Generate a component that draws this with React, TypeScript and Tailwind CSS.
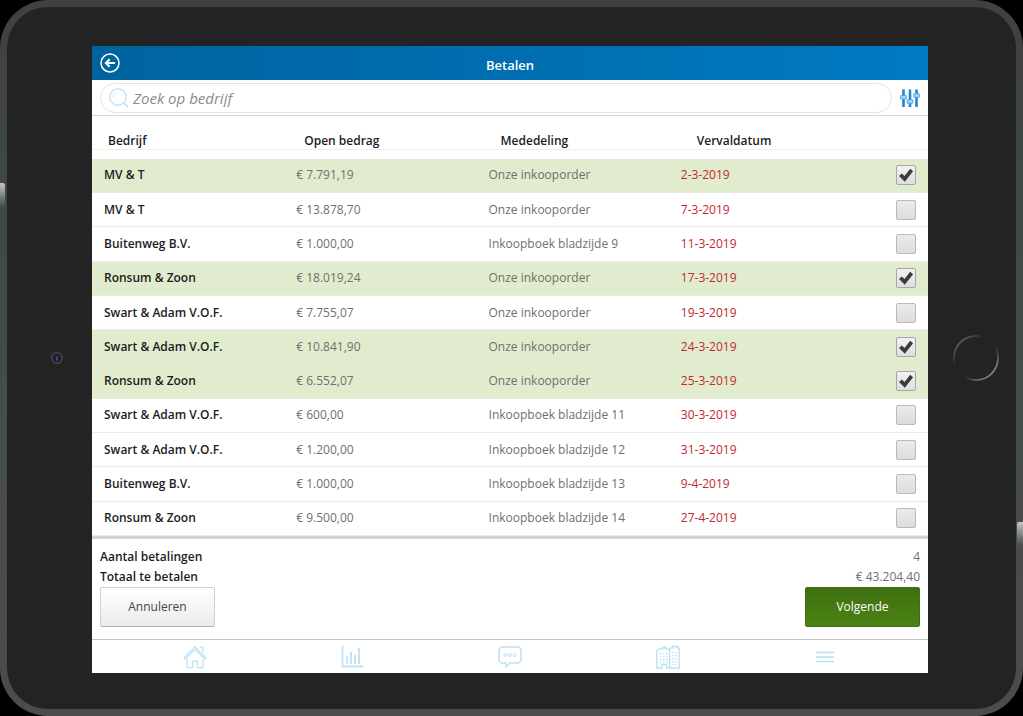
import { useState } from "react";
import type { ReactNode } from "react";

type Payment = {
  company: string;
  amount: number;
  note: string;
  due: string;
  selected: boolean;
};

const initialPayments: Payment[] = [
  { company: "MV & T", amount: 7791.19, note: "Onze inkooporder", due: "2-3-2019", selected: true },
  { company: "MV & T", amount: 13878.7, note: "Onze inkooporder", due: "7-3-2019", selected: false },
  { company: "Buitenweg B.V.", amount: 1000, note: "Inkoopboek bladzijde 9", due: "11-3-2019", selected: false },
  { company: "Ronsum & Zoon", amount: 18019.24, note: "Onze inkooporder", due: "17-3-2019", selected: true },
  { company: "Swart & Adam V.O.F.", amount: 7755.07, note: "Onze inkooporder", due: "19-3-2019", selected: false },
  { company: "Swart & Adam V.O.F.", amount: 10841.9, note: "Onze inkooporder", due: "24-3-2019", selected: true },
  { company: "Ronsum & Zoon", amount: 6552.07, note: "Onze inkooporder", due: "25-3-2019", selected: true },
  { company: "Swart & Adam V.O.F.", amount: 600, note: "Inkoopboek bladzijde 11", due: "30-3-2019", selected: false },
  { company: "Swart & Adam V.O.F.", amount: 1200, note: "Inkoopboek bladzijde 12", due: "31-3-2019", selected: false },
  { company: "Buitenweg B.V.", amount: 1000, note: "Inkoopboek bladzijde 13", due: "9-4-2019", selected: false },
  { company: "Ronsum & Zoon", amount: 9500, note: "Inkoopboek bladzijde 14", due: "27-4-2019", selected: false },
];

function euro(value: number) {
  const [whole, cents] = value.toFixed(2).split(".");
  return `€ ${whole.replace(/\B(?=(\d{3})+$)/g, ".")},${cents}`;
}

function BackIcon() {
  return (
    <svg className="size-5" viewBox="0 0 20 20" fill="none" stroke="white" aria-hidden="true">
      <circle cx="10" cy="10" r="9" strokeWidth="1.5" />
      <path d="M15 10H6M9.6 6.2 5.8 10l3.8 3.8" strokeWidth="2" />
    </svg>
  );
}

function SearchIcon() {
  return (
    <svg className="size-5 shrink-0" viewBox="0 0 20 20" fill="none" stroke="#c6e3f6" aria-hidden="true">
      <circle cx="9" cy="9" r="8.2" strokeWidth="1.5" />
      <path d="M4.2 9.2a5.2 5.2 0 0 1 3.6-4.8" strokeWidth="0.8" />
      <path d="m15 15 4 4" strokeWidth="2" />
    </svg>
  );
}

function FilterIcon() {
  return (
    <svg className="h-5 w-5" viewBox="0 0 20 20" fill="none" aria-hidden="true">
      <path d="M3.5 1.500v17.500M10 1.500v17.500M16.500 1.500v17.500" stroke="#1f86cf" strokeWidth="2.600" />
      <g fill="#a9d6f5" stroke="#3f9fe0" strokeWidth="0.900">
        <rect x="0.600" y="7.500" width="5.800" height="3.600" rx="0.600" />
        <rect x="7.100" y="11.700" width="5.800" height="3.600" rx="0.600" />
        <rect x="13.600" y="5.700" width="5.800" height="3.600" rx="0.600" />
      </g>
    </svg>
  );
}

function HomeIcon() {
  return (
    <svg className="size-6" viewBox="0 0 24 24" fill="none" stroke="#c0e1f7" strokeWidth="1.300" aria-hidden="true">
      <path d="M1 13 12 1.600 23 13l-1.200 1.100L12 4.200l-9.800 9.900z" />
      <path d="M4.200 14v8.700h5.600v-6.500h4.600v6.500h5.600V14M16.500 2.200h3.300v5" />
    </svg>
  );
}

function ChartIcon() {
  return (
    <svg className="h-[22px] w-[22px]" viewBox="0 0 22 22" fill="none" stroke="#c0e1f7" aria-hidden="true">
      <path d="M1.500 0v20.500H22" strokeWidth="1.800" />
      <path d="M6.200 18v-7.500M10 18V6M14 18V9M18 18V2" strokeWidth="2" />
    </svg>
  );
}

function ChatIcon() {
  return (
    <svg className="h-[22px] w-6" viewBox="0 0 24 22" fill="none" stroke="#c0e1f7" aria-hidden="true">
      <path
        d="M4.500 1h15A3.500 3.500 0 0 1 23 4.500v9a3.500 3.500 0 0 1-3.500 3.500h-7.800L8 20.800V17H4.500A3.500 3.500 0 0 1 1 13.500v-9A3.500 3.500 0 0 1 4.500 1z"
        strokeWidth="1.600"
      />
      <g strokeWidth="1">
        <circle cx="7.300" cy="9" r="1.500" />
        <circle cx="12" cy="9" r="1.500" />
        <circle cx="16.700" cy="9" r="1.500" />
      </g>
    </svg>
  );
}

function BuildingsIcon() {
  return (
    <svg className="size-6" viewBox="0 0 24 24" fill="none" stroke="#b9dff7" aria-hidden="true">
      <path
        d="M.8 23V5.500l2.700-1.700h2.700V3h4v.8h1.600l1.900 1.700V23h-3v-3.500H6V23zM13.700 23h9.500V3.200h-1.700v-1.700h-5v1.700h-2.800v2.300M8.200 3V.3"
        strokeWidth="1.300"
      />
      <path d="M4.600 8v10M7.800 8v10M11 8v10M17 7v13M20 7v13" strokeWidth="1.300" strokeDasharray="1.500 1.500" />
    </svg>
  );
}

function MenuIcon() {
  return (
    <svg className="h-3 w-[18px]" viewBox="0 0 18 12" stroke="#b9dff7" strokeWidth="1.700" aria-hidden="true">
      <path d="M0 1.500h18M0 6h18M0 10.500h18" />
    </svg>
  );
}

const tabs: { label: string; icon: ReactNode }[] = [
  { label: "Home", icon: <HomeIcon /> },
  { label: "Cijfers", icon: <ChartIcon /> },
  { label: "Berichten", icon: <ChatIcon /> },
  { label: "Bedrijven", icon: <BuildingsIcon /> },
  { label: "Menu", icon: <MenuIcon /> },
];

function PaymentCheckbox({ label, checked, onChange }: { label: string; checked: boolean; onChange: () => void }) {
  return (
    <label className="relative block size-5">
      <input
        type="checkbox"
        aria-label={label}
        checked={checked}
        onChange={onChange}
        className="block size-5 appearance-none rounded-xs border border-[#bababa] bg-linear-to-b from-[#ebebeb] to-[#dcdcdc] checked:border-[#a6a6a6] checked:from-[#f2f2f2] checked:to-[#dedede]"
      />
      {checked && (
        <svg className="pointer-events-none absolute inset-0 size-5" viewBox="0 0 20 20" aria-hidden="true">
          <path d="M3 11 5.800 8.400l2.700 2.600 5.700-7.200 2.900 2.500-8.300 10.500z" fill="#3b3b3b" />
        </svg>
      )}
    </label>
  );
}

export default function App() {
  const [payments, setPayments] = useState(initialPayments);
  const selected = payments.filter((p) => p.selected);
  const total = selected.reduce((sum, p) => sum + p.amount, 0);

  const toggle = (index: number) =>
    setPayments((list) => list.map((p, i) => (i === index ? { ...p, selected: !p.selected } : p)));

  return (
    <div className="flex min-h-screen bg-black font-['Open_Sans','Noto_Sans',sans-serif] text-xs text-[#6f6f6f]">
      <div className="relative flex flex-1 overflow-hidden rounded-[48px] bg-linear-to-b from-[#3d4142] via-[#454b4b] to-[#4b4d4d] p-[7px]">
        <span className="absolute top-[183px] left-0 h-6 w-[5px] rounded-r-xs bg-linear-to-b from-[#c4c7c7] to-[#454b4b]" />
        <span className="absolute top-[522px] right-0 h-6 w-[6px] rounded-l-xs bg-linear-to-b from-[#c4c7c7] to-[#454b4b]" />
        <div className="grid flex-1 grid-cols-[85px_1fr_88px] items-center rounded-[41px] bg-[#232323]">
          <div className="flex justify-center pl-[14px]">
            <svg className="size-[14px]" viewBox="0 0 14 14" aria-hidden="true">
              <circle cx="7" cy="7" r="6.300" fill="#3c3a44" />
              <circle cx="7" cy="7" r="4" fill="#1f1c30" />
              <path d="M6 9.500h2L7.500 5h-1z" fill="#55526e" />
            </svg>
          </div>

          <main className="mt-[39px] mb-9 flex flex-col self-stretch bg-white">
            <header className="grid h-[34px] grid-cols-[1fr_auto_1fr] items-center bg-linear-to-r from-[#00639f] to-[#007ac2] px-2">
              <button type="button" aria-label="Terug" className="justify-self-start">
                <BackIcon />
              </button>
              <h1 className="pt-1 text-[13px] leading-5 font-semibold text-white">Betalen</h1>
            </header>

            <div className="flex h-9 items-center gap-2 border-b border-[#d9d9d9] px-2">
              <label className="flex h-[30px] flex-1 items-center gap-1 rounded-full border border-[#e2e2e2] px-2">
                <SearchIcon />
                <input
                  type="search"
                  aria-label="Zoek op bedrijf"
                  placeholder="Zoek op bedrijf"
                  className="min-w-0 flex-1 bg-transparent text-[15px] italic outline-none placeholder:text-[#8c8c8c]"
                />
              </label>
              <button type="button" aria-label="Filter">
                <FilterIcon />
              </button>
            </div>

            <table className="h-[420px] w-full table-fixed border-collapse text-left">
              <colgroup>
                <col className="w-[23%]" />
                <col className="w-[23%]" />
                <col className="w-[23%]" />
                <col className="w-[23%]" />
                <col className="w-[8%]" />
              </colgroup>
              <thead className="text-[#1c1c1c]">
                <tr className="h-[33px] border-b border-[#f0f0ea] align-bottom">
                  <th className="pl-4 font-semibold">Bedrijf</th>
                  <th className="pl-5 font-semibold">Open bedrag</th>
                  <th className="pl-6 font-semibold">Mededeling</th>
                  <th className="pl-7 font-semibold">Vervaldatum</th>
                  <td />
                </tr>
                <tr className="h-[10px]">
                  <td colSpan={5} />
                </tr>
              </thead>
              <tbody>
                {payments.map((p, i) => (
                  <tr key={i} className={p.selected ? "border-b border-[#e8eedc] bg-[#e1ecce]" : "border-b border-[#ececec]"}>
                    <td className="pl-3 font-semibold text-[#1c1c1c]">{p.company}</td>
                    <td className="pl-3">{euro(p.amount)}</td>
                    <td className="pl-3">{p.note}</td>
                    <td className="pl-3 text-[#c1272d]">{p.due}</td>
                    <td>
                      <div className="flex justify-end pr-3">
                        <PaymentCheckbox
                          label={`${p.company} ${euro(p.amount)}`}
                          checked={p.selected}
                          onChange={() => toggle(i)}
                        />
                      </div>
                    </td>
                  </tr>
                ))}
              </tbody>
            </table>

            <section className="flex-1 border-t-[3px] border-[#d4d4d4] px-2 pt-2">
              <dl className="leading-5">
                <div className="flex justify-between">
                  <dt className="font-semibold text-[#1c1c1c]">Aantal betalingen</dt>
                  <dd>{selected.length}</dd>
                </div>
                <div className="flex justify-between">
                  <dt className="font-semibold text-[#1c1c1c]">Totaal te betalen</dt>
                  <dd>{euro(total)}</dd>
                </div>
              </dl>
              <div className="flex justify-between pb-3">
                <button
                  type="button"
                  className="h-10 w-[115px] rounded-xs border border-[#cfcfcf] border-b-[#b3b3b3] bg-linear-to-b from-white to-[#ebebeb] text-[#444444]"
                >
                  Annuleren
                </button>
                <button
                  type="button"
                  className="h-10 w-[115px] rounded-xs border border-[#3f7010] bg-linear-to-b from-[#3f6f0f] to-[#4b8215] text-white"
                >
                  Volgende
                </button>
              </div>
            </section>

            <nav className="grid h-[34px] grid-cols-5 border-t border-[#c4c4c4] px-6">
              {tabs.map((tab) => (
                <a key={tab.label} href="#" aria-label={tab.label} className="flex items-center justify-center">
                  {tab.icon}
                </a>
              ))}
            </nav>
          </main>

          <div className="flex justify-center pl-2">
            <svg className="size-[46px]" viewBox="0 0 46 46" fill="none" aria-hidden="true">
              <defs>
                <linearGradient id="ring" x1="0" y1="0" x2="1" y2="1">
                  <stop offset="0.100" stopColor="#626262" />
                  <stop offset="0.350" stopColor="#232323" />
                  <stop offset="0.580" stopColor="#232323" />
                  <stop offset="0.900" stopColor="#8e8e8e" />
                </linearGradient>
              </defs>
              <circle cx="23" cy="23" r="22" stroke="url(#ring)" strokeWidth="1.800" />
            </svg>
          </div>
        </div>
      </div>
    </div>
  );
}
